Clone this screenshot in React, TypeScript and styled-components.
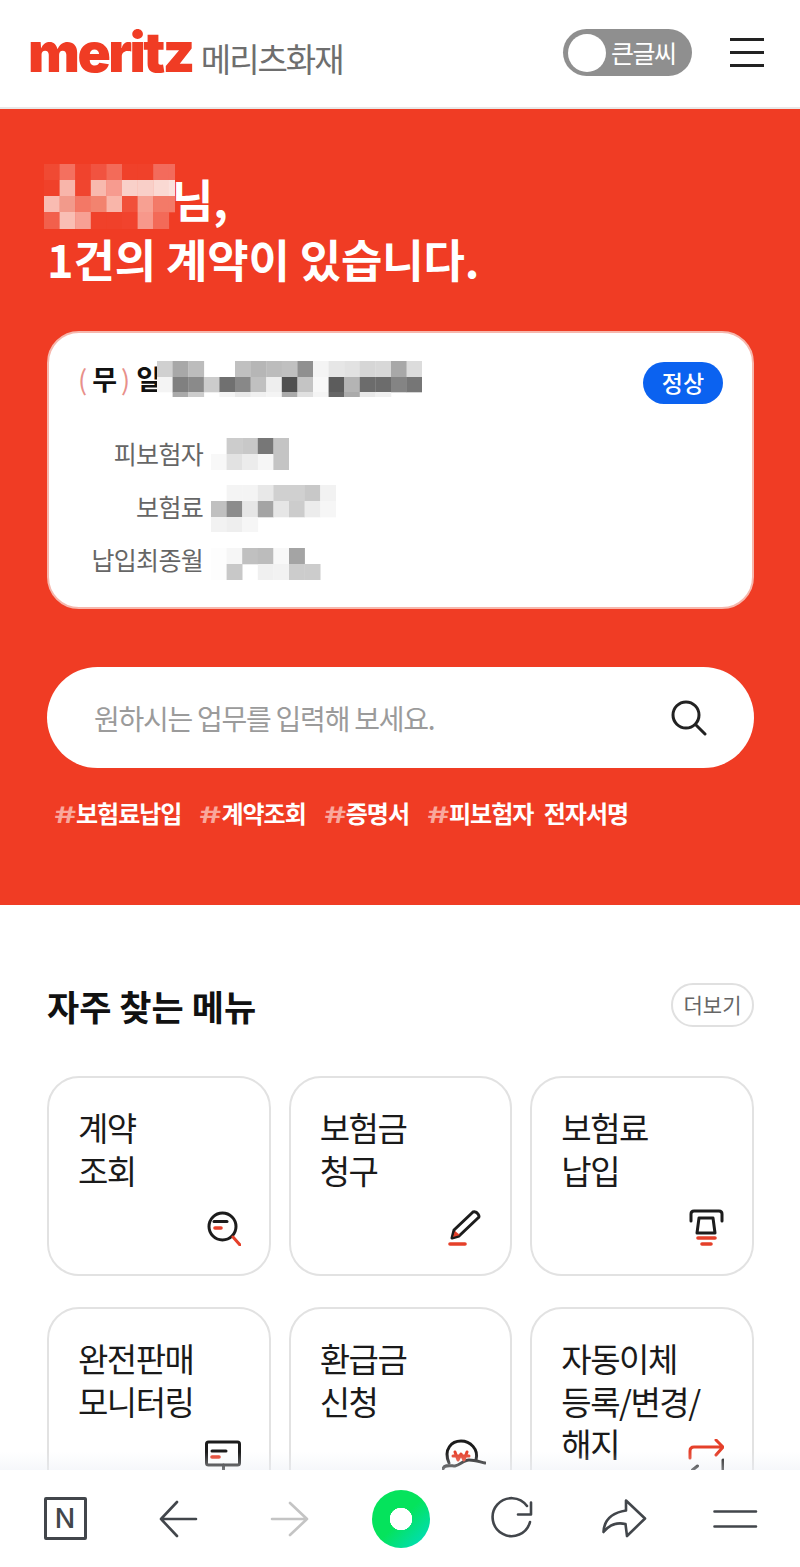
import styled, { createGlobalStyle } from 'styled-components';

const KR = `'Noto Sans CJK KR', 'Noto Sans', sans-serif`;
const RED = '#f03c24';

const GlobalStyle = createGlobalStyle`
  html, body {
    margin: 0;
    padding: 0;
    background: #fff;
    font-family: ${KR};
  }
  * { box-sizing: border-box; }
`;

const Page = styled.div`
  position: relative;
  width: 800px;
  height: 1567px;
  overflow: hidden;
  background: #fff;
`;

const Header = styled.header`
  height: 109px;
  display: flex;
  align-items: center;
  padding: 0 36px 0 28px;
  border-bottom: 2px solid #e8e8e8;
`;

const Logo = styled.div`
  display: flex;
  align-items: baseline;
  gap: 8px;
  flex: 1;
  margin-top: 3px;
`;

const LogoWord = styled.span`
  font-family: Inter, sans-serif;
  font-weight: 900;
  font-size: 55px;
  line-height: 60px;
  letter-spacing: -2.5px;
  color: ${RED};
`;

const LogoKr = styled.span`
  font-size: 33px;
  line-height: 60px;
  letter-spacing: -2px;
  color: #6e6e6e;
`;

const Toggle = styled.div`
  width: 129px;
  height: 47px;
  border-radius: 24px;
  background: #8f8f8f;
  display: flex;
  align-items: center;
  gap: 5px;
  padding: 0 5px;
  margin-top: -2px;
  margin-right: 38px;
`;

const Knob = styled.span`
  width: 38px;
  height: 38px;
  border-radius: 50%;
  background: #fff;
`;

const ToggleText = styled.span`
  color: #fff;
  font-size: 25px;
  letter-spacing: -1.5px;
  line-height: 47px;
`;

const Burger = styled.div`
  width: 34px;
  display: flex;
  flex-direction: column;
  gap: 10px;
  margin-top: -2px;
`;

const BurgerLine = styled.span`
  height: 3px;
  background: #222;
`;

const Hero = styled.section`
  height: 796px;
  background: ${RED};
  padding: 55px 46px 0 47px;
`;

const Greeting = styled.h1`
  margin: 0;
  color: #fff;
  font-size: 45px;
  font-weight: 700;
  line-height: 60px;
  letter-spacing: -0.15px;
`;

const NameLine = styled.div`
  display: flex;
  align-items: flex-end;
  height: 65px;
  margin-left: -3px;
`;

const NameEnd = styled.span`
  margin-left: -3px;
`;

const Sheet = styled.div`
  margin-top: 42px;
  height: 278px;
  background: #fff;
  border: 2px solid #f6b7ad;
  border-radius: 32px;
  padding: 21px 29px 0 29px;
`;

const SheetTop = styled.div`
  display: flex;
  align-items: flex-start;
  justify-content: space-between;
`;

const SheetTitle = styled.div`
  display: flex;
  align-items: center;
  height: 46px;
  font-size: 27px;
  font-weight: 700;
  color: #111;
  padding-top: 3px;
`;

const Paren = styled.span<{ $gap: string }>`
  color: #e8908a;
  font-weight: 400;
  margin: ${(p) => p.$gap};
`;

const TitleEnd = styled.span`
  margin-right: -4px;
`;

const Badge = styled.span`
  width: 80px;
  height: 42px;
  margin-top: 8px;
  border-radius: 21px;
  background: #0b62f0;
  color: #fff;
  font-size: 23px;
  font-weight: 500;
  line-height: 40px;
  text-align: center;
`;

const Rows = styled.dl`
  margin: 22px 0 0 0;
  display: grid;
  grid-template-columns: 125px auto;
  grid-auto-rows: 53px;
  column-gap: 8px;
  align-items: center;
  justify-content: start;
`;

const Label = styled.dt`
  font-size: 25px;
  letter-spacing: -0.7px;
  color: #666;
  text-align: right;
`;

const Value = styled.dd<{ $shift: number }>`
  margin: 0;
  display: flex;
  transform: translateY(${(p) => p.$shift}px);
`;

const Search = styled.div`
  margin-top: 58px;
  height: 101px;
  border-radius: 51px;
  background: #fff;
  display: flex;
  align-items: center;
  justify-content: space-between;
  padding: 0 47px;
`;

const Placeholder = styled.span`
  font-size: 28px;
  letter-spacing: -1.25px;
  color: #9b9b9b;
`;

const Tags = styled.div`
  margin-top: 27px;
  padding-left: 6px;
  display: flex;
  gap: 17px;
`;

const Tag = styled.span`
  color: #fff;
  font-size: 24px;
  font-weight: 700;
  letter-spacing: -1px;
  word-spacing: 6px;
  line-height: 36px;
`;

const Hash = styled.span`
  display: inline-block;
  width: 23px;
  text-align: center;
  font-size: 23px;
  font-weight: 700;
  color: #f9a79c;
  transform: scaleX(1.7);
`;

const Menu = styled.section`
  padding: 78px 46px 0 47px;
`;

const MenuHead = styled.div`
  display: flex;
  align-items: center;
  justify-content: space-between;
  height: 44px;
  margin-bottom: 49px;
`;

const MenuTitle = styled.h2`
  margin: 0;
  font-size: 35px;
  font-weight: 700;
  color: #111;
`;

const More = styled.span`
  width: 83px;
  height: 44px;
  border: 2px solid #e0e0e0;
  border-radius: 22px;
  text-align: center;
  font-size: 21px;
  line-height: 38px;
  color: #666;
`;

const Grid = styled.div`
  display: grid;
  grid-template-columns: repeat(3, 1fr);
  column-gap: 18px;
  row-gap: 31px;
`;

const Tile = styled.div`
  height: 200px;
  border: 2px solid #e2e2e2;
  border-radius: 32px;
  padding: 28px 28px 28px 29px;
  display: flex;
  flex-direction: column;
`;

const TileName = styled.div`
  flex: 1;
  min-height: 0;
  font-size: 33px;
  line-height: 42.5px;
  letter-spacing: -1.5px;
  color: #1a1a1a;
  white-space: pre-line;
`;

const TileIcon = styled.svg`
  align-self: flex-end;
  width: 36px;
  height: 38px;
  flex: none;
  fill: none;
  stroke: #1c1c1c;
  stroke-width: 3;
  stroke-linecap: round;
  stroke-linejoin: round;
`;

const WideIcon = styled(TileIcon)`
  width: 44px;
  margin-right: -4px;
`;

const Accent = styled.path`
  stroke: #e5402a;
`;

const AccentBar = styled(Accent)`
  stroke-width: 3.6;
`;

const AccentFill = styled.path`
  fill: #e5402a;
  stroke: none;
`;

const BottomBar = styled.nav`
  position: absolute;
  left: 0;
  right: 0;
  bottom: 0;
  height: 97px;
  background: #fff;
  display: grid;
  grid-template-columns: repeat(7, 112px);
  padding: 0 9px;
  align-items: center;
  &::before {
    content: '';
    position: absolute;
    left: 0;
    right: 0;
    top: -18px;
    height: 18px;
    background: linear-gradient(rgba(235, 238, 245, 0), rgba(235, 238, 245, 0.45));
  }
`;

const BarSlot = styled.div`
  display: flex;
  justify-content: center;
`;

const BarIcon = styled.svg<{ $faded?: boolean }>`
  width: 48px;
  height: 48px;
  fill: none;
  stroke: ${(p) => (p.$faded ? '#c4c4c4' : '#42464b')};
  stroke-width: 2.6;
  stroke-linecap: round;
  stroke-linejoin: round;
`;

const NBox = styled.span`
  width: 43px;
  height: 43px;
  border: 3px solid #42464b;
  border-radius: 2px;
  color: #42464b;
  font-family: Inter, sans-serif;
  font-size: 27px;
  font-weight: 500;
  line-height: 37px;
  text-align: center;
`;

const GreenDot = styled.span`
  width: 58px;
  height: 58px;
  border-radius: 50%;
  background: radial-gradient(circle at 50% 50%, #fff 0 11px, transparent 11.5px),
    linear-gradient(135deg, #05e35c 50%, #00dcc0 95%);
`;

const MosaicSvg = styled.svg`
  display: block;
  flex: none;
`;

// pixelated (blurred out) personal data
type Cells = string[][];

const Mosaic = ({ cells, sizes, clip }: { cells: Cells; sizes: number[]; clip?: number }) => {
  const w = 15.6;
  const cols = Math.max(...cells.map((r) => r.length));
  let top = 0;
  const rects = cells.flatMap((row, y) => {
    const out = row.map((c, x) => (
      <rect key={`${y}-${x}`} x={x * w} y={top} width={w + 0.3} height={sizes[y] + 0.3} fill={c} />
    ));
    top += sizes[y];
    return out;
  });
  return (
    <MosaicSvg width={clip ?? cols * w} height={top}>
      {rects}
    </MosaicSvg>
  );
};

const g = (...v: string[]) => v.map((x) => (x === '-' ? 'transparent' : `#${x.repeat(3)}`));

const nameCells: Cells = [
  ['#f04a33', '#f4705f', '#f0432d', '#f15340', '#f36b59', '#f0412a', '#f0412a', '#f36b5c', '#f36b5c'],
  ['#f0412a', '#f8b5aa', '#f0452f', '#f8b9ae', '#f79b8f', '#f9d0c9', '#f9cfc8', '#fad9d3', '#fbe0dc'],
  ['#f9bcb2', '#f29a8b', '#f37866', '#f2836f', '#f9b6aa', '#f1503a', '#f7a092', '#f37a68', '#f37a68'],
  ['#f2604c', '#f9beb4', '#f7a094', '#f0412a', '#f0412a', '#f1432d', '#f7988b', '#f36a58', 'transparent'],
];

const titleCells: Cells = [
  g('d0', 'a8', 'bc', '-', '-', 'c0', 'b6', 'bc', 'c0', '90', 'f4', 'e6', 'e2', 'd6', 'd8', 'a8', 'dc'),
  g('f4', '80', '8a', 'cc', '70', '88', 'c0', 'ee', '50', 'c4', 'f8', '5c', 'b4', '6c', '6c', '84', '76'),
  g('-', 'aa', 'cc', '-', 'f4', 'e8', 'f0', 'f4', 'aa', 'e0', 'f4', '66', 'aa', 'e8', 'f0', '-', '-'),
];

const insuredCells: Cells = [
  g('-', 'cc', 'c8', '77', 'c4'),
  g('f8', 'e2', 'ec', 'f6', 'c4'),
];

const premiumCells: Cells = [
  g('-', 'f4', 'f4', 'e8', 'd0', 'd0', 'c8', 'f2'),
  g('c0', '8c', 'e6', 'a4', 'e6', 'cc', 'ec', 'f6'),
  g('f2', 'ee', 'f6', '-', '-', '-', '-', '-'),
];

const lastMonthCells: Cells = [
  g('fd', 'f6', 'c0', 'bc', 'f8', 'a4', '-', '-'),
  g('fd', 'c8', '-', 'f0', 'f2', 'cc', 'cc', '-'),
];

const tags = ['보험료납입', '계약조회', '증명서', '피보험자 전자서명'];

const ZoomIcon = () => (
  <TileIcon viewBox="0 0 36 38">
    <circle cx="17.5" cy="18.5" r="13.5" />
    <path d="M9 13.5h13" />
    <AccentBar d="M10 20h6" />
    <Accent d="M28 29l7 8" />
  </TileIcon>
);

const PenIcon = () => (
  <TileIcon viewBox="0 0 36 38">
    <path d="M6 30 8 22 27 4q3-1 5 2t0 4L13 28z" />
    <AccentFill d="M7 29l2-6 5 4z" />
    <AccentBar d="M4 36h15" />
  </TileIcon>
);

const AtmIcon = () => (
  <TileIcon viewBox="0 0 36 38">
    <path d="M3 13V6q0-3 3-3h25q3 0 3 3v7" />
    <path d="M11 10h14l2 15H9z" />
    <AccentBar d="M10 30h17M14 36h9" />
  </TileIcon>
);

const BoardIcon = () => (
  <TileIcon viewBox="0 0 36 38">
    <rect x="1.5" y="3" width="33" height="23" rx="2" />
    <path d="M7 12h14M18.5 26v10" />
    <AccentBar d="M7 18h7" />
  </TileIcon>
);

const RefundIcon = () => (
  <WideIcon viewBox="0 0 44 38">
    <path d="M7 24C1 10 10 2 19 2s18 8 15 19" />
    <path d="M1 30c1-5 8-3 12-3 5-1 9-6 14-6 6 0 11 2 16 3M1 33h14" />
    <Accent d="M13 13l3 8 3-6 3 6 3-8M11 17h16" />
  </WideIcon>
);

const TransferIcon = () => (
  <TileIcon viewBox="0 0 36 38">
    <Accent d="M2 19v-7q0-4 4-4h29M28 1l7 7-7 8" />
    <path d="M35 21v10M4.5 31l5-4" />
  </TileIcon>
);

const menuItems = [
  { name: '계약\n조회', Icon: ZoomIcon },
  { name: '보험금\n청구', Icon: PenIcon },
  { name: '보험료\n납입', Icon: AtmIcon },
  { name: '완전판매\n모니터링', Icon: BoardIcon },
  { name: '환급금\n신청', Icon: RefundIcon },
  { name: '자동이체\n등록/변경/\n해지', Icon: TransferIcon },
];

const App = () => (
  <Page>
    <GlobalStyle />
    <Header>
      <Logo>
        <LogoWord>meritz</LogoWord>
        <LogoKr>메리츠화재</LogoKr>
      </Logo>
      <Toggle>
        <Knob />
        <ToggleText>큰글씨</ToggleText>
      </Toggle>
      <Burger>
        <BurgerLine />
        <BurgerLine />
        <BurgerLine />
      </Burger>
    </Header>

    <Hero>
      <Greeting>
        <NameLine>
          <Mosaic cells={nameCells} sizes={[16, 16, 16, 17]} clip={131} />
          <NameEnd>님,</NameEnd>
        </NameLine>
        1건의 계약이 있습니다.
      </Greeting>

      <Sheet>
        <SheetTop>
          <SheetTitle>
            <Paren $gap="0 5px 0 0">(</Paren>무<Paren $gap="0 0 0 4px">)</Paren>&nbsp;
            <TitleEnd>일</TitleEnd>
            <Mosaic cells={titleCells} sizes={[16, 15, 5]} />
          </SheetTitle>
          <Badge>정상</Badge>
        </SheetTop>
        <Rows>
          <Label>피보험자</Label>
          <Value $shift={1}>
            <Mosaic cells={insuredCells} sizes={[16, 16]} />
          </Value>
          <Label>보험료</Label>
          <Value $shift={3}>
            <Mosaic cells={premiumCells} sizes={[16, 16, 15]} />
          </Value>
          <Label>납입최종월</Label>
          <Value $shift={5}>
            <Mosaic cells={lastMonthCells} sizes={[16, 16]} />
          </Value>
        </Rows>
      </Sheet>

      <Search>
        <Placeholder>원하시는 업무를 입력해 보세요.</Placeholder>
        <svg width="36" height="36" viewBox="0 0 36 36" fill="none" stroke="#222" strokeWidth="3" strokeLinecap="round">
          <circle cx="15" cy="15" r="13" />
          <path d="M25 25l9 9" />
        </svg>
      </Search>

      <Tags>
        {tags.map((t) => (
          <Tag key={t}>
            <Hash>#</Hash>
            {t}
          </Tag>
        ))}
      </Tags>
    </Hero>

    <Menu>
      <MenuHead>
        <MenuTitle>자주 찾는 메뉴</MenuTitle>
        <More>더보기</More>
      </MenuHead>
      <Grid>
        {menuItems.map(({ name, Icon }) => (
          <Tile key={name}>
            <TileName>{name}</TileName>
            <Icon />
          </Tile>
        ))}
      </Grid>
    </Menu>

    <BottomBar>
      <BarSlot>
        <NBox>N</NBox>
      </BarSlot>
      <BarSlot>
        <BarIcon viewBox="0 0 48 48">
          <path d="M43 24H8M24 7 8 24l16 17" />
        </BarIcon>
      </BarSlot>
      <BarSlot>
        <BarIcon viewBox="0 0 48 48" $faded>
          <path d="M7 24h35M25 8l17 16-17 16" />
        </BarIcon>
      </BarSlot>
      <BarSlot>
        <GreenDot />
      </BarSlot>
      <BarSlot>
        <BarIcon viewBox="0 0 48 48">
          <path d="M38 11A19 19 0 1 0 41 27" />
          <path d="M42 7.5v12H29" />
        </BarIcon>
      </BarSlot>
      <BarSlot>
        <BarIcon viewBox="0 0 48 48">
          <path d="M25 5.5 44 23.5 26 41 24.5 29C15 27 8 30 2.500 37 3 27 9 18 25 15.500z" />
        </BarIcon>
      </BarSlot>
      <BarSlot>
        <BarIcon viewBox="0 0 48 48">
          <path d="M1.500 16.500H43M1.500 31.500H43" />
        </BarIcon>
      </BarSlot>
    </BottomBar>
  </Page>
);

export default App;
